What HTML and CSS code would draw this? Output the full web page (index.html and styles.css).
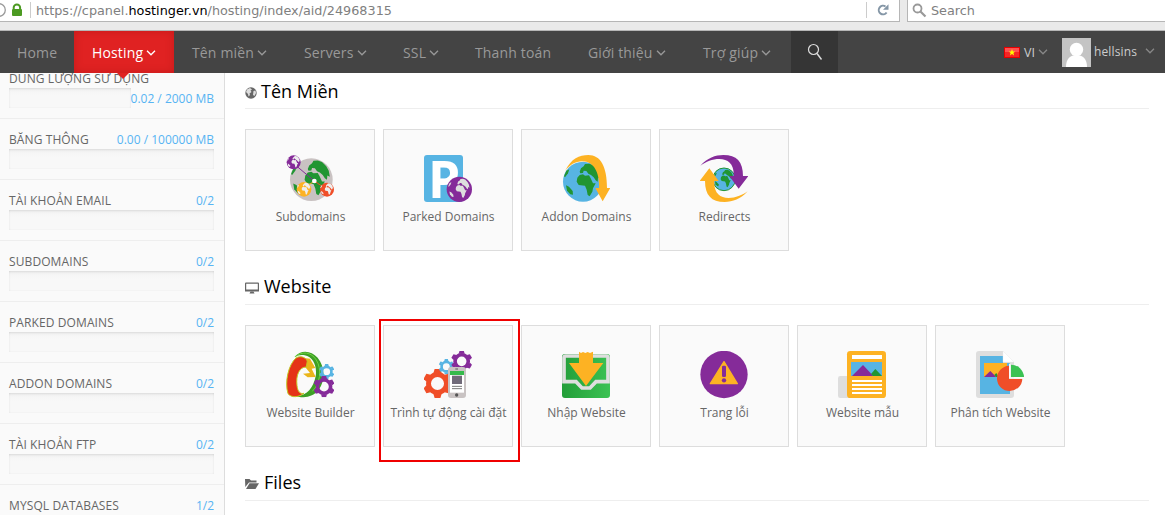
FILE: index.html
```html
<!DOCTYPE html>
<html lang="vi">
<head>
<meta charset="utf-8">
<title>cPanel</title>
<link rel="stylesheet" href="styles.css">
</head>
<body>
<svg class="defs" width="0" height="0">
  <defs>
    <symbol id="land" viewBox="0 0 120 120">
      <path d="M50 40 60 38 66 42 78 41 83 50 90 65 98 65 90 80 88 90 80 104 74 100 71 84 66 72 47 70 41 60 43 48Z"/>
      <path d="M50 30 54 20 62 14 66 7 78 6 90 10 102 22 109 35 112 52 105 48 104 60 98 56 92 47 84 40 76 36 70 28 62 27 60 34 52 35Z"/>
      <path d="M9 71 18 75 29 88 30 99 22 98 12 87Z"/>
      <path d="M10 27 19 23 15 35 6 47 3 44Z"/>
    </symbol>
    <symbol id="gear" viewBox="-50 -50 100 100">
      <circle r="31" fill="none" stroke="currentColor" stroke-width="17"/>
      <g fill="currentColor">
        <path d="M-14-36-10-50H10L14-36Z"/>
        <path d="M-14-36-10-50H10L14-36Z" transform="rotate(60)"/>
        <path d="M-14-36-10-50H10L14-36Z" transform="rotate(120)"/>
        <path d="M-14-36-10-50H10L14-36Z" transform="rotate(180)"/>
        <path d="M-14-36-10-50H10L14-36Z" transform="rotate(240)"/>
        <path d="M-14-36-10-50H10L14-36Z" transform="rotate(300)"/>
      </g>
    </symbol>
    <symbol id="chev" viewBox="0 0 10 6"><path d="M1 .8 5 4.8 9 .8" fill="none" stroke="currentColor" stroke-width="1.3"/></symbol>
  </defs>
</svg>

<div class="browser">
  <div class="field url">
    <svg class="chrome-icons" width="36" height="21" viewBox="0 0 36 21">
      <circle cx="-1" cy="10" r="6.3" fill="none" stroke="#999" stroke-width="1.3"/>
      <path d="M13.7 9V7.600a3.200 3.200 0 0 1 6.400 0V9" fill="none" stroke="#4c9a22" stroke-width="2"/>
      <rect x="12" y="9" width="10" height="7" rx="1" fill="#4c9a22"/>
      <path d="M30.500 2V18" stroke="#ccc"/>
    </svg>
    <span class="address">https://cpanel.<b>hostinger.vn</b>/hosting/index/aid/24968315</span>
    <span class="reload"><svg width="12" height="12" viewBox="0 0 12 12"><path d="M9.600 8.500A4.300 4.300 0 1 1 8.500 2.500" fill="none" stroke="#8496a6" stroke-width="2"/><path d="M11.500.3V5.800H6Z" fill="#8496a6"/></svg></span>
  </div>
  <div class="field find">
    <svg width="15" height="15" viewBox="0 0 15 15"><circle cx="5.500" cy="5.500" r="4" fill="none" stroke="#999" stroke-width="1.800"/><path d="M8.500 8.500 13.500 13.500" stroke="#999" stroke-width="2.200"/></svg>
    <span>Search</span>
  </div>
</div>

<nav class="nav">
  <a class="item home">Home</a>
  <a class="item active w100">Hosting<svg class="chev"><use href="#chev"/></svg></a>
  <a class="item w112">Tên miền<svg class="chev"><use href="#chev"/></svg></a>
  <a class="item w99">Servers<svg class="chev"><use href="#chev"/></svg></a>
  <a class="item w72">SSL<svg class="chev"><use href="#chev"/></svg></a>
  <a class="item w113">Thanh toán</a>
  <a class="item w115">Giới thiệu<svg class="chev"><use href="#chev"/></svg></a>
  <a class="item w106">Trợ giúp<svg class="chev"><use href="#chev"/></svg></a>
  <a class="search"><svg width="16" height="18" viewBox="0 0 16 18"><circle cx="6.500" cy="6.500" r="5" fill="none" stroke="#ddd" stroke-width="1.200"/><path d="M10 10.500 14.500 16.500" stroke="#ddd" stroke-width="1.400"/></svg></a>
  <div class="account">
    <svg class="flag" width="16" height="11" viewBox="0 0 16 11"><rect width="16" height="11" fill="#e80000"/><rect x="1" y="1" width="14" height="9" fill="#ff5050"/><rect x="1" y="5" width="14" height="5" fill="#f52525"/><path d="M8 2 8.900 4.500H11.200L9.400 6 10.100 8.500 8 7 5.900 8.500 6.600 6 4.800 4.500H7.100Z" fill="#ff0"/></svg>
    <span class="lang">VI</span><svg class="chev dim"><use href="#chev"/></svg>
    <svg class="avatar" width="29" height="29" viewBox="0 0 29 29"><rect width="29" height="29" fill="#c4c4c4"/><circle cx="14.500" cy="11.500" r="6.700" fill="#fff"/><path d="M4 29C4 21 8 17 14.500 17S25 21 25 29Z" fill="#fff"/></svg>
    <span class="user">hellsins</span><svg class="chev dim last"><use href="#chev"/></svg>
  </div>
</nav>

<div class="page">
  <aside class="sidebar">
    <div class="stat disk"><div class="name">DUNG LƯỢNG SỬ DỤNG</div><div class="split"><div class="bar"></div><span class="value">0.02 / 2000 MB</span></div></div>
    <div class="stat"><div class="name">BĂNG THÔNG<span class="value">0.00 / 100000 MB</span></div><div class="bar"></div></div>
    <div class="stat"><div class="name">TÀI KHOẢN EMAIL<span class="value">0/2</span></div><div class="bar"></div></div>
    <div class="stat"><div class="name">SUBDOMAINS<span class="value">0/2</span></div><div class="bar"></div></div>
    <div class="stat"><div class="name">PARKED DOMAINS<span class="value">0/2</span></div><div class="bar"></div></div>
    <div class="stat"><div class="name">ADDON DOMAINS<span class="value">0/2</span></div><div class="bar"></div></div>
    <div class="stat"><div class="name">TÀI KHOẢN FTP<span class="value">0/2</span></div><div class="bar"></div></div>
    <div class="stat last-stat"><div class="name">MYSQL DATABASES<span class="value">1/2</span></div></div>
  </aside>

  <main class="main">
    <section class="group">
      <h2 class="title"><svg width="12" height="12" viewBox="0 0 12 12"><circle cx="6" cy="6" r="5.700" fill="#666"/><path d="M2 2.500 5 1 7 2.500 5.500 3.500 6.500 5 4.500 6.500 5 8 3.500 9.500 3 7 1 5ZM8.500 4 10.500 3.500 11 6 9.500 9 8 8Z" fill="#ddd"/></svg><span>Tên Miền</span></h2>
      <div class="cards">
        <a class="card"><svg class="icon" viewBox="0 0 144 144">
          <circle cx="76" cy="74" r="64" fill="#c9c2c2"/>
          <use href="#land" x="12" y="10" width="128" height="128" fill="#219532"/>
          <path d="M28 30 85 78" stroke="#852b99" stroke-width="3"/><path d="M60 96 85 78" stroke="#fdb223" stroke-width="3"/><path d="M85 78 120 102" stroke="#f04e28" stroke-width="3"/>
          <circle cx="23" cy="22" r="21" fill="#852b99"/><use href="#land" x="2" y="1" width="42" height="42" fill="#eee"/>
          <circle cx="54" cy="103" r="22" fill="#fdb223"/><use href="#land" x="32" y="81" width="44" height="44" fill="#eee"/>
          <circle cx="123" cy="104" r="21" fill="#f04e28"/><use href="#land" x="102" y="83" width="42" height="42" fill="#eee"/>
          <circle cx="85" cy="78" r="7" fill="#fff"/>
        </svg><span>Subdomains</span></a>
        <a class="card"><svg class="icon" viewBox="0 0 144 144">
          <rect width="117" height="141" rx="9" fill="#57b4e3"/>
          <text class="parking" x="12" y="128">P</text>
          <circle cx="106" cy="103" r="38" fill="#852b99"/><use href="#land" x="71" y="68" width="70" height="70" fill="#dedede"/>
        </svg><span>Parked Domains</span></a>
        <a class="card"><svg class="icon" viewBox="0 0 144 144">
          <circle cx="63" cy="80" r="60" fill="#57b4e3"/><use href="#land" x="3" y="20" width="120" height="120" fill="#219532"/>
          <path d="M9 48C28 10 52 0 79 0C116 0 135 35 135 99H145L122 139 100 99H111C113 58 99 20 61 19C40 19 23 30 9 48Z" fill="#fdb223"/>
        </svg><span>Addon Domains</span></a>
        <a class="card"><svg class="icon" viewBox="0 0 144 144">
          <circle cx="72" cy="73" r="34" fill="#57b4e3" stroke="#219532" stroke-width="3"/><use href="#land" x="40" y="41" width="64" height="64" fill="#219532"/>
          <path d="M1 32C22 9 46 0 70 0C110 0 129 20 129 63H145L116 101 88 63H101C103 28 85 12 58 12C37 12 18 20 1 32Z" fill="#852b99"/>
          <path d="M1 32C22 9 46 0 70 0C110 0 129 20 129 63H145L116 101 88 63H101C103 28 85 12 58 12C37 12 18 20 1 32Z" fill="#fdb223" transform="rotate(180 72 70.500)"/>
        </svg><span>Redirects</span></a>
      </div>
    </section>

    <section class="group">
      <h2 class="title raised"><svg width="15" height="12" viewBox="0 0 15 12"><path d="M1 .5H13Q14 .5 14 1.500V9.500H0V1.500Q0 .5 1 .5ZM1.200 1.700V7.400H12.800V1.700Z" fill="#666" fill-rule="evenodd"/><path d="M5.500 9.500H8.500L9.500 11.500H4.500Z" fill="#666"/></svg><span>Website</span></h2>
      <div class="cards">
        <a class="card"><svg class="icon" viewBox="0 0 144 144">
          <path d="M25 18C45-5 75-2 95 20C116 45 119 86 99 115C82 140 50 143 28 134C60 138 82 112 89 76C94 48 82 17 56 13C43 11 34 14 25 18Z" fill="#3d9f26"/>
          <path d="M27 18C48-1 76 3 91 27C108 55 103 98 79 121" fill="none" stroke="#70d440" stroke-width="3"/>
          <path d="M55 21 72 23 88 51 77 53 89 78 65 79 51 68 72 66 55 45Z" fill="#eab51b"/>
          <path d="M30 21C43 13 58 18 64 30L61 48C40 48 29 72 33 104C35 121 42 130 54 127C40 138 17 142 6 128C-5 92 8 40 30 21Z" fill="#e53317" stroke="#c1ca22" stroke-width="3"/>
          <use href="#gear" x="99" y="39" width="46" height="46" color="#57b4e3"/>
          <use href="#gear" x="82" y="75" width="64" height="64" color="#852b99"/>
        </svg><span>Website Builder</span></a>
        <a class="card marked"><svg class="icon" viewBox="0 0 144 144">
          <use href="#gear" x="-3" y="54" width="87" height="87" color="#f04e28"/>
          <use href="#gear" x="44" y="24" width="46" height="46" color="#57b4e3"/>
          <use href="#gear" x="81" y="-1" width="64" height="64" color="#852b99"/>
          <rect x="72" y="48" width="54" height="93" rx="9" fill="#c9c3c3"/><rect x="78" y="60" width="42" height="65" fill="#fff"/><path d="M78 60H120V72H78Z" fill="#35ba4b"/>
          <path d="M84 74H114V99H84Z" fill="#706a79"/><path d="M84 106H114M84 113H114" stroke="#777" stroke-width="3"/><circle cx="98" cy="132" r="5" fill="#555"/><path d="M94 54H102" stroke="#777" stroke-width="4"/>
        </svg><span>Trình tự động cài đặt</span></a>
        <a class="card"><svg class="icon" viewBox="0 0 144 144">
          <defs><linearGradient id="tray"><stop stop-color="#239e39"/><stop offset="1" stop-color="#3bc253"/></linearGradient></defs>
          <path d="M0 95V18Q0 9 9 9H135Q144 9 144 18V132Q144 141 135 141H9Q0 141 0 132Z" fill="url(#tray)"/>
          <path d="M6 20Q6 15 11 15H133Q138 15 138 20V92H102L84 111H60L42 92H6Z" fill="none" stroke="#dedede" stroke-width="11"/>
          <path d="M51 2 57 6 63 3 70 6 77 3 84 6 93 2V36H124L72 105 21 36H51Z" fill="#fdb223"/>
        </svg><span>Nhập Website</span></a>
        <a class="card"><svg class="icon" viewBox="0 0 144 144">
          <circle cx="72" cy="70.500" r="71" fill="#852b99"/><path d="M72 32 112 98H31Z" fill="#fdb223" stroke="#fdb223" stroke-width="4" stroke-linejoin="round"/>
          <rect x="66" y="44" width="12" height="34" rx="4" fill="#852b99"/><circle cx="72" cy="88" r="6.500" fill="#852b99"/>
        </svg><span>Trang lỗi</span></a>
        <a class="card"><svg class="icon" viewBox="0 0 144 144">
          <rect y="75" width="50" height="66" rx="7" fill="#dedede"/><rect x="27" width="117" height="141" rx="10" fill="#fdb223"/>
          <path d="M42 12H132V24H42Z" fill="#fff"/><path d="M39 33H132V75H39Z" fill="#57b4e3"/><path d="M42 75 75 42 106 75Z" fill="#852b99"/><path d="M99 69 112 54 132 75H105Z" fill="#219532"/>
          <path d="M42 90H132M42 102H132M42 114H132M42 126H132" stroke="#fff" stroke-width="6"/>
        </svg><span>Website mẫu</span></a>
        <a class="card"><svg class="icon" viewBox="0 0 144 144">
          <path d="M9 0H81L114 33V132Q114 141 105 141H9Q0 141 0 132V9Q0 0 9 0Z" fill="#dedede"/><path d="M12 15H81V36H102V129H12Z" fill="#57b4e3"/>
          <path d="M81 0 114 33H81Z" fill="#fff" stroke="#eee" stroke-width="1"/><path d="M24 36H93V78H24Z" fill="#fdb223"/><path d="M24 78 43 60 61 78Z" fill="#852b99"/><path d="M55 72 61 66 68 78H61Z" fill="#219532"/>
          <path d="M99 44V83H139A38 38 0 1 1 99 44Z" fill="#f04e28"/><path d="M99 38H104V79H144V83H99Z" fill="#fafafa"/><path d="M105 41A39 39 0 0 1 144 78H105Z" fill="#3bc253"/>
        </svg><span>Phân tích Website</span></a>
      </div>
    </section>

    <section class="group final">
      <h2 class="title raised"><svg width="15" height="12" viewBox="0 0 15 12"><path d="M0 1H4.500L6 2.500H11.500V4.500H4L.3 9Z" fill="#666"/><path d="M4.500 5.300H14L10.500 11H1Z" fill="#666"/></svg><span>Files</span></h2>
    </section>
  </main>
</div>
</body>
</html>
```

FILE: styles.css
```css
* { box-sizing: border-box; }
body { margin: 0; height: 515px; overflow: hidden; background: #fff; font-family: "Open Sans", sans-serif; }
.defs { position: absolute; }
svg { display: block; flex: none; }

.browser { display: flex; gap: 7px; height: 31px; padding-bottom: 8px; background: #eaeaea; border-bottom: 1px solid #b6b6b6; font: 12.8px "DejaVu Sans", sans-serif; color: #808080; }
.field { display: flex; height: 22px; background: #fff; border-bottom: 1px solid #b6b6b6; line-height: 21px; }
.url { width: 900px; border-right: 1px solid #b6b6b6; }
.address { flex: 1; white-space: nowrap; }
.address b { font-weight: 400; color: #000; }
.reload { width: 33px; height: 16px; margin-top: 2px; padding: 2px 0 0 10px; border-left: 1px solid #ccc; }
.find { flex: 1; gap: 4px; padding-left: 4px; border-left: 1px solid #b6b6b6; }
.find svg { margin-top: 3px; }

.nav { display: flex; height: 42px; background: #444; color: #999; font-size: 14px; }
.item { display: flex; align-items: center; height: 42px; padding: 1px 0 0 18px; gap: 3px; letter-spacing: .15px; white-space: nowrap; }
.home { width: 74px; padding-left: 17px; }
.w72 { width: 72px; }
.w99 { width: 99px; }
.w100 { width: 100px; }
.w106 { width: 106px; }
.w112 { width: 112px; }
.w113 { width: 113px; }
.w115 { width: 115px; }
.chev { width: 10px; height: 6px; }
.active { position: relative; background: #e02222; color: #fff; box-shadow: inset 0 0 9px rgba(120, 0, 0, .25); }
.active::after { content: ""; position: absolute; z-index: 2; top: 42px; left: 43px; border: 6px solid transparent; border-top-color: #e02222; border-bottom: 0; }
.search { display: flex; width: 47px; padding: 12px 0 0 16px; background: #353535; }
.account { display: flex; align-items: center; flex: 1; padding-left: 166px; font-size: 12px; color: #ccc; }
.lang { margin: 0 3px 0 4px; font-size: 12.5px; }
.dim { color: #888; }
.dim path { stroke-width: 1; }
.avatar { margin: 1px 3px 0 14px; }
.user { margin-top: -2px; letter-spacing: .15px; }
.last { margin: -2px 0 0 8px; }

.page { display: flex; height: 442px; overflow: hidden; }
.sidebar { width: 225px; overflow: hidden; background: #fafafa; border-right: 1px solid #ddd; color: #666; font-size: 12px; }
.stat { height: 61px; padding: 10px 10px 0 9px; border-bottom: 1px solid #eee; }
.disk { margin-top: -15px; }
.last-stat { height: 30px; border-bottom: 0; }
.name { display: flex; justify-content: space-between; height: 20px; line-height: 22px; letter-spacing: .1px; white-space: nowrap; }
.value { color: #57b4f3; line-height: 22px; letter-spacing: 0; white-space: nowrap; }
.bar { height: 20px; background: linear-gradient(#f4f4f4, #f8f8f8 40%); box-shadow: inset 0 2px 3px -1px rgba(0, 0, 0, .1), inset 0 0 2px rgba(0, 0, 0, .07); }
.split { display: flex; height: 20px; }
.split .bar { flex: 1; }

.main { flex: 1; padding: 0 16px 0 20px; }
.group { height: 196px; }
.final { height: 50px; }
.title { display: flex; align-items: center; height: 36px; margin: 0 0 20px; gap: 4px; border-bottom: 1px solid #eee; font-size: 18px; font-weight: 400; color: #000; }
.title svg { margin-top: 4px; }
.raised { padding-bottom: 2px; }
.cards { display: flex; gap: 8px; }
.card { position: relative; display: flex; flex-direction: column; align-items: center; width: 130px; height: 122px; padding: 25px 0 0 1px; background: #fafafa; border: 1px solid #ddd; color: #666; font-size: 12px; line-height: 18px; white-space: nowrap; }
.card span { margin-top: 5px; }
.icon { width: 48px; height: 48px; margin-left: -1px; }
.parking { font: 700 154px "Open Sans", sans-serif; fill: #fff; }
.marked::after { content: ""; position: absolute; inset: -7px -8px -16px -5px; border: 2px solid #f00000; }
```
